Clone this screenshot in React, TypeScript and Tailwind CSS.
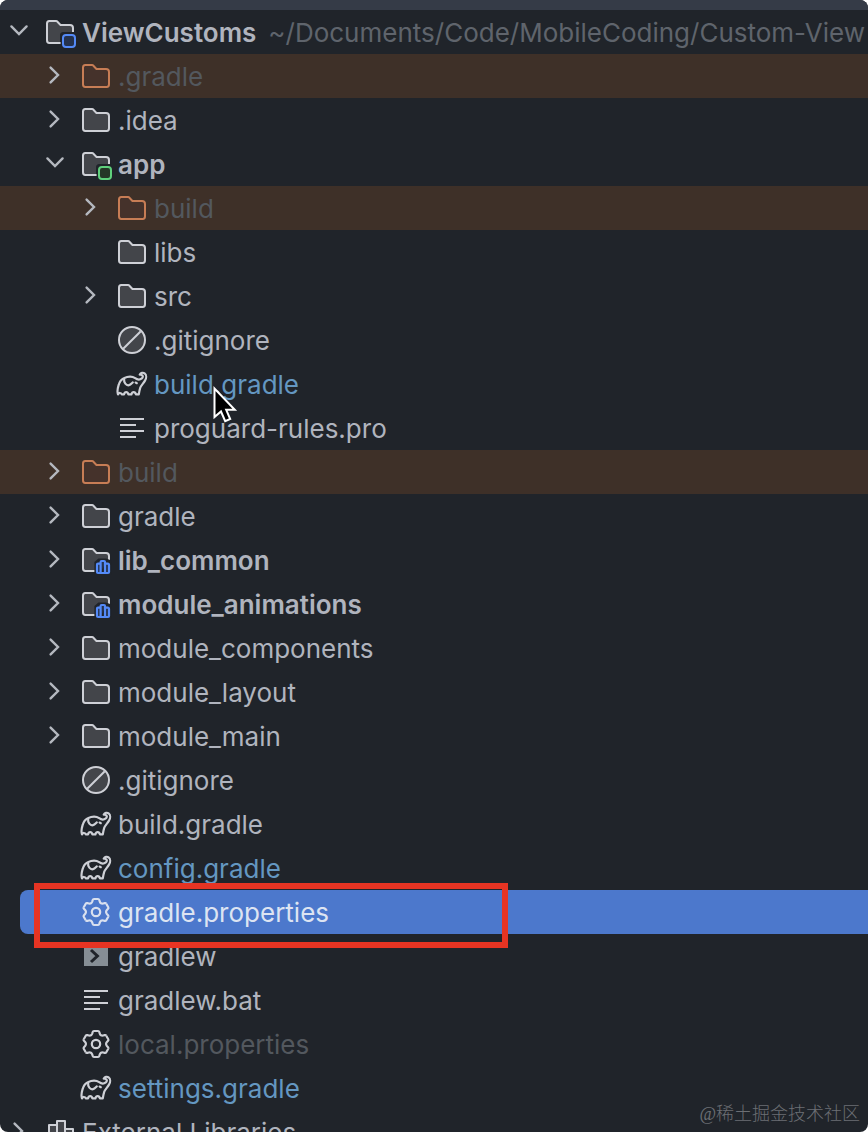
import React from 'react';
import clsx from 'clsx';

type IconName =
  | 'folder'
  | 'excluded'
  | 'project'
  | 'module'
  | 'library'
  | 'ignored'
  | 'gradle'
  | 'text'
  | 'gear'
  | 'shell'
  | 'libraries';

type Tone = 'normal' | 'dim' | 'blue' | 'selected';

interface TreeItem {
  name: string;
  icon: IconName;
  level: 0 | 1 | 2;
  arrow?: 'open' | 'closed';
  tone?: Tone;
  bold?: boolean;
  excluded?: boolean;
  selected?: boolean;
  path?: string;
}

const items: TreeItem[] = [
  { name: 'ViewCustoms', icon: 'project', level: 0, arrow: 'open', bold: true, path: '~/Documents/Code/MobileCoding/Custom-View' },
  { name: '.gradle', icon: 'excluded', level: 1, arrow: 'closed', tone: 'dim', excluded: true },
  { name: '.idea', icon: 'folder', level: 1, arrow: 'closed' },
  { name: 'app', icon: 'module', level: 1, arrow: 'open', bold: true },
  { name: 'build', icon: 'excluded', level: 2, arrow: 'closed', tone: 'dim', excluded: true },
  { name: 'libs', icon: 'folder', level: 2 },
  { name: 'src', icon: 'folder', level: 2, arrow: 'closed' },
  { name: '.gitignore', icon: 'ignored', level: 2 },
  { name: 'build.gradle', icon: 'gradle', level: 2, tone: 'blue' },
  { name: 'proguard-rules.pro', icon: 'text', level: 2 },
  { name: 'build', icon: 'excluded', level: 1, arrow: 'closed', tone: 'dim', excluded: true },
  { name: 'gradle', icon: 'folder', level: 1, arrow: 'closed' },
  { name: 'lib_common', icon: 'library', level: 1, arrow: 'closed', bold: true },
  { name: 'module_animations', icon: 'library', level: 1, arrow: 'closed', bold: true },
  { name: 'module_components', icon: 'folder', level: 1, arrow: 'closed' },
  { name: 'module_layout', icon: 'folder', level: 1, arrow: 'closed' },
  { name: 'module_main', icon: 'folder', level: 1, arrow: 'closed' },
  { name: '.gitignore', icon: 'ignored', level: 1 },
  { name: 'build.gradle', icon: 'gradle', level: 1 },
  { name: 'config.gradle', icon: 'gradle', level: 1, tone: 'blue' },
  { name: 'gradle.properties', icon: 'gear', level: 1, tone: 'selected', selected: true },
  { name: 'gradlew', icon: 'shell', level: 1 },
  { name: 'gradlew.bat', icon: 'text', level: 1 },
  { name: 'local.properties', icon: 'gear', level: 1, tone: 'dim' },
  { name: 'settings.gradle', icon: 'gradle', level: 1, tone: 'blue' },
  { name: 'External Libraries', icon: 'libraries', level: 0, arrow: 'closed' },
];

const indents = ['pl-0.5', 'pl-[38px]', 'pl-[74px]'];

const tones: Record<Tone, string> = {
  normal: 'text-[#b0b4be]',
  dim: 'text-[#53585e]',
  blue: 'text-[#6497c1]',
  selected: 'text-[#dde4f2]',
};

const FOLDER =
  'M8.1 4.35L8.25 4.5H13C13.83 4.5 14.5 5.17 14.5 6V12.13C14.5 12.95 13.93 13.5 13.37 13.5H2.63C2.07 13.5 1.5 12.95 1.5 12.13V3.87C1.5 3.05 2.07 2.5 2.63 2.5H6.12C6.26 2.5 6.39 2.56 6.48 2.65L8.1 4.35Z';

// Folder with the lower right corner left free for a badge
const BadgeFolder = () => (
  <>
    <path
      d="M8 13.5H2.63C2.07 13.5 1.5 12.95 1.5 12.13V3.87C1.5 3.05 2.07 2.5 2.63 2.5H6.12C6.26 2.5 6.39 2.56 6.48 2.65L8.25 4.5H13C13.83 4.5 14.5 5.17 14.5 6V8H9.5C8.7 8 8 8.7 8 9.5Z"
      fill="#43454a"
    />
    <path
      d="M8.3 13.5H2.63C2.07 13.5 1.5 12.95 1.5 12.13V3.87C1.5 3.05 2.07 2.5 2.63 2.5H6.12C6.26 2.5 6.39 2.56 6.48 2.65L8.25 4.5H13C13.83 4.5 14.5 5.17 14.5 6V8"
      stroke="#ced0d6"
    />
  </>
);

const shapes: Record<IconName, React.ReactNode> = {
  folder: <path d={FOLDER} fill="#43454a" stroke="#ced0d6" />,
  excluded: <path d={FOLDER} fill="#45322b" stroke="#c77d55" />,
  project: (
    <>
      <BadgeFolder />
      <rect x="9.5" y="9.5" width="6" height="6" rx="1.5" fill="#25324d" stroke="#548af7" />
    </>
  ),
  module: (
    <>
      <BadgeFolder />
      <rect x="9.5" y="9.5" width="6" height="6" rx="1.5" fill="#253627" stroke="#5fd07c" />
    </>
  ),
  library: (
    <>
      <BadgeFolder />
      <path d="M7.2 15.5V9L9.2 7.2H13L15.7 8.3V15.5Z" fill="#20242a" />
      <path
        d="M10.3 14.5H9C8.7 14.5 8.5 14.3 8.5 14V10.3C8.5 10 8.7 9.8 9 9.8H10.3M10.3 14.5V9C10.3 8.7 10.5 8.5 10.8 8.5H12C12.3 8.5 12.5 8.7 12.5 9V14.5M10.3 14.5H14C14.3 14.5 14.5 14.3 14.5 14V10.5C14.5 10.1 14.2 9.8 13.8 9.8H12.5"
        fill="#25324d"
        stroke="#548af7"
        strokeWidth="1.1"
      />
    </>
  ),
  ignored: (
    <>
      <circle cx="8" cy="8" r="6.5" fill="#43454a" stroke="#ced0d6" />
      <path d="M3.6 12.4L12.4 3.6" stroke="#ced0d6" />
    </>
  ),
  gradle: (
    <g stroke="#ced0d6" strokeLinecap="round" strokeLinejoin="round" strokeWidth="1.1">
      <path d="M11.9 3.3C12.4 2.4 13.5 2.1 14.3 2.7C15.4 3.5 15.2 5.2 14.5 6.3C13.7 7.7 12.6 8.6 12.1 9.9C11.8 10.8 11.6 12 11.4 13.2H10C9.6 11.7 8.1 11.6 7.7 13.2H6.2C5.8 11.7 4.4 11.7 4 13.2H2.9C2.5 12.3 1.6 12.2 1 13.2C0.7 12.4 0.8 10.2 1.3 8.6C1.8 6.8 2.7 5.6 3.9 5.1C5.9 4.2 8.1 4.1 9.6 5.1C10.7 5.9 12 5.9 12.9 5.2C13.7 4.5 13.5 3.5 12.7 3.4" />
      <path d="M4.1 5.8C3.8 7.2 5.1 8.9 6.5 8.6C7.4 8.4 7.8 7.7 8.4 7.2" />
      <path d="M9.8 7.3L10.4 7.6" />
    </g>
  ),
  text: <path d="M2 3.5H14M2 6.5H10M2 9.5H14M2 12.5H10" stroke="#ced0d6" />,
  gear: (
    <g transform="translate(8 8)" stroke="currentColor" strokeLinejoin="round" strokeWidth="1.1">
      {[0, 60, 120, 180, 240, 300].map((angle) => (
        <path
          key={angle}
          transform={`rotate(${angle})`}
          d="M-1 -6.5H1Q1.5 -6.5 1.65 -6L1.9 -5.2Q2.1 -4.6 2.52 -4.36Q2.93 -4.12 3.55 -4.24L4.37 -4.43Q4.88 -4.55 5.13 -4.12"
        />
      ))}
      <circle r="2.1" />
    </g>
  ),
  shell: (
    <>
      <path d="M2 3H14V13H2Z" fill="#868e95" />
      <path d="M5.5 5L8.7 8L5.5 11" stroke="#20242a" strokeWidth="1.5" />
    </>
  ),
  libraries: (
    <g fill="#43454a" stroke="#ced0d6" strokeLinejoin="round">
      <path d="M2.5 4.5H6.5V13.5H2.5Z" />
      <path d="M10.5 6.5H14.5V13.5H10.5Z" />
      <path d="M6.5 2.5H10.5V13.5H6.5Z" />
    </g>
  ),
};

const TreeIcon = ({ item }: { item: TreeItem }) => (
  <svg
    viewBox="0 0 16 16"
    fill="none"
    aria-hidden="true"
    className={clsx('size-8 shrink-0', item.selected ? 'text-[#d9e0ef]' : 'text-[#ced0d6]')}
  >
    {shapes[item.icon]}
  </svg>
);

const Arrow = ({ item }: { item: TreeItem }) => {
  if (!item.arrow) {
    return <span className="size-8 shrink-0" />;
  }
  return (
    <button type="button" aria-label={`Toggle ${item.name}`} className="size-8 shrink-0">
      <svg viewBox="0 0 16 16" fill="none" stroke="#b4b8bf" strokeLinecap="round" className="size-8">
        <path d={item.arrow === 'open' ? 'M4.7 5.2L8.5 9L12.3 5.2' : 'M6.3 3.8L10 7.5L6.3 11.2'} strokeWidth="1.2" />
      </svg>
    </button>
  );
};

const TreeRow = ({ item }: { item: TreeItem }) => (
  <li
    role="treeitem"
    aria-level={item.level + 1}
    aria-selected={!!item.selected}
    className={clsx('relative', item.excluded && 'bg-[#3e3028]')}
  >
    {item.selected && <span className="absolute inset-y-0 left-5 right-0 rounded-l-lg bg-[#4c78cc]" />}
    <div className={clsx('relative flex h-11 items-center', indents[item.level])}>
      <Arrow item={item} />
      <span className="ml-2.5 flex">
        <TreeIcon item={item} />
      </span>
      <span className="ml-1.5 flex gap-3 pt-0.5 whitespace-nowrap">
        <span className={clsx(tones[item.tone ?? 'normal'], item.bold && 'font-semibold')}>{item.name}</span>
        {item.path && <span className="text-[#5f646c]">{item.path}</span>}
      </span>
    </div>
    {item.selected && (
      <span className="absolute -top-[7px] left-[34px] z-10 h-[65px] w-[474px] border-6 border-[#e63423]" />
    )}
    {item.name === 'build.gradle' && item.level === 2 && (
      <svg viewBox="0 0 26 40" className="absolute left-[212px] top-6 z-10 h-10 w-[26px]" aria-hidden="true">
        <path
          d="M2.5 2.5V31L9 25.5L13.2 35.2L18.2 33L14.2 23.8H22.8Z"
          fill="#000"
          stroke="#fff"
          strokeWidth="2"
        />
      </svg>
    )}
  </li>
);

const App = () => {
  return (
    <div className="h-screen bg-white">
      <main className="relative h-full overflow-hidden rounded-lg bg-[#20242a] font-['Inter',sans-serif] text-[26px] leading-8 [font-optical-sizing:none]">
        <div className="h-2.5 bg-[#353b47]" />
        <ul role="tree" aria-label="Project">
          {items.map((item, index) => (
            <TreeRow key={index} item={item} />
          ))}
        </ul>
        <p className="absolute bottom-1.5 right-2 font-['Liberation_Serif','Noto_Sans_CJK_SC',sans-serif] text-[18px] leading-6 font-light text-[#6c6f74]">
          @稀土掘金技术社区
        </p>
      </main>
    </div>
  );
};

export default App;
